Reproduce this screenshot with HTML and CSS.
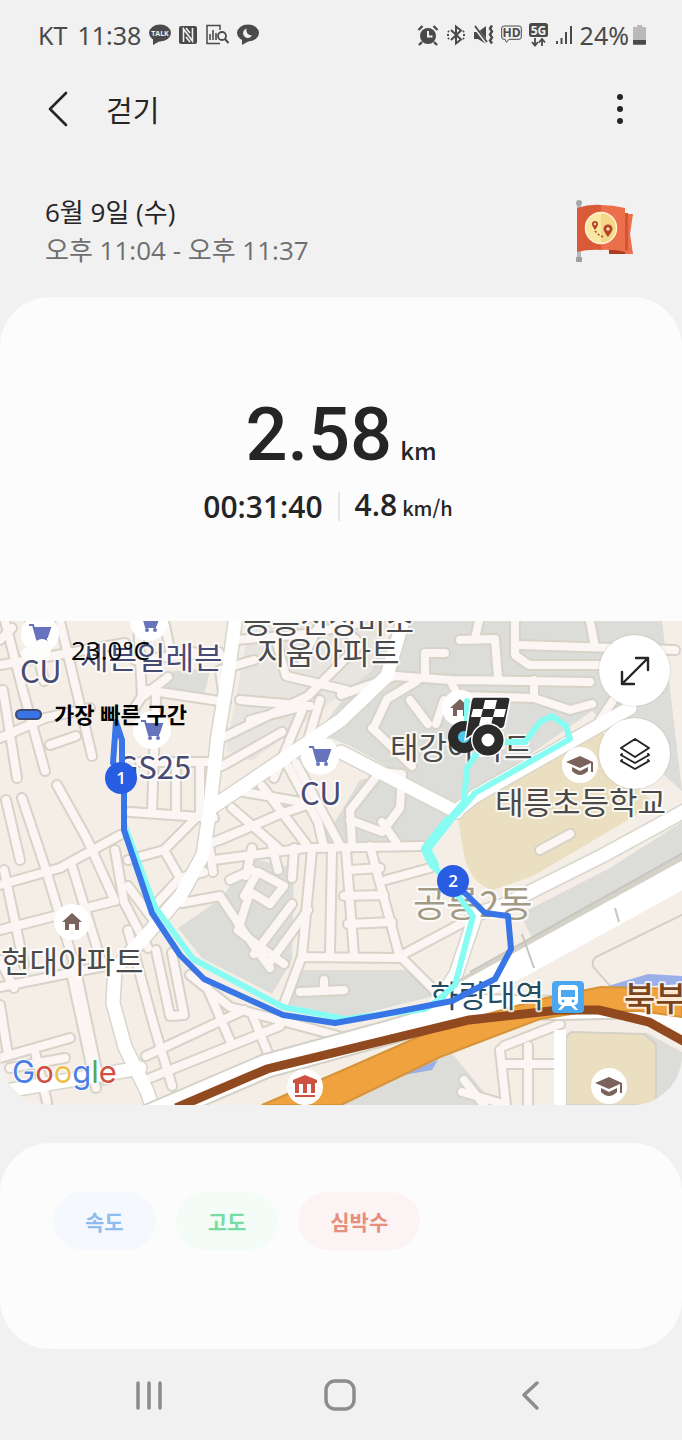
FILE: index.html
```html
<!DOCTYPE html>
<html lang="ko">
<head>
    <meta charset="UTF-8">
    <meta name="viewport" content="width=device-width, initial-scale=1.0">
    <title>걷기</title>
    <link rel="stylesheet" href="styles.css">
</head>
<body>
    <div class="status-bar">
        <div class="status-left">
            <span>KT</span>
            <span class="clock">11:38</span>
            <div class="status-icons">
                <svg width="22" height="22" viewBox="0 0 22 22">
                    <ellipse cx="11" cy="9" rx="11" ry="8.500" fill="#4a4a4a"/>
                    <path d="M4 14v7l7-4z" fill="#4a4a4a"/>
                    <text x="11" y="12" class="talk-text">TALK</text>
                </svg>
                <svg width="18" height="22" viewBox="0 0 18 22">
                    <rect y="2" width="18" height="18" rx="2" fill="#4a4a4a"/>
                    <path d="M4.500 18V5l9 12V4M7 4l4 5M7 13l4 5" fill="none" stroke="#f1f1f1" stroke-width="1.600"/>
                </svg>
                <svg width="24" height="22" viewBox="0 0 24 22">
                    <path d="M15 6V1.500H2v18h13" fill="none" stroke="#4a4a4a" stroke-width="1.500"/>
                    <path d="M5 16v-6M8 16V6M11 16V9" stroke="#4a4a4a" stroke-width="1.600"/>
                    <circle cx="17" cy="12" r="4" fill="none" stroke="#4a4a4a" stroke-width="1.800"/>
                    <path d="M20 15l3.500 4" stroke="#4a4a4a" stroke-width="2"/>
                </svg>
                <svg width="22" height="22" viewBox="0 0 22 22">
                    <ellipse cx="11" cy="9" rx="11" ry="8.500" fill="#4a4a4a"/>
                    <path d="M5 14v7l7-4z" fill="#4a4a4a"/>
                    <path d="M9.500 4.500a4.800 4.800 0 1 0 5.500 7a5.500 5.500 0 0 1-5.500-7z" fill="#f1f1f1"/>
                </svg>
            </div>
        </div>
        <div class="status-right">
            <svg width="22" height="22" viewBox="0 0 22 22">
                <circle cx="11" cy="12" r="8" fill="#4a4a4a"/>
                <path d="M1.500 6l4-4M20.500 6l-4-4M5 18l-3 3M17 18l3 3" stroke="#4a4a4a" stroke-width="2.400"/>
                <path d="M11 7v5.500h4.500" fill="none" stroke="#f1f1f1" stroke-width="2"/>
            </svg>
            <svg width="20" height="22" viewBox="0 0 20 22">
                <path d="M5 6l10 9.500-5 4V2.500l5 4L5 16" fill="none" stroke="#4a4a4a" stroke-width="2"/>
                <path d="M1 11h2M17 11h2M2 7l1 1M2 15l1-1M18 7l-1 1M18 15l-1-1" stroke="#4a4a4a" stroke-width="2"/>
            </svg>
            <svg width="21" height="22" viewBox="0 0 21 22">
                <path d="M1 8h4l8-6v18l-8-5H1z" fill="#4a4a4a"/>
                <path d="M1 2l13 17" stroke="#f1f1f1" stroke-width="3.500"/>
                <path d="M2 2l12 16" stroke="#4a4a4a" stroke-width="1.800"/>
                <path d="M19 1.500l-2 3 2 3-2 3 2 3-2 3 2 3" fill="none" stroke="#4a4a4a" stroke-width="2.400"/>
            </svg>
            <svg width="21" height="22" viewBox="0 0 21 22">
                <path d="M3 2h15q2.300 0 2.300 2v9q0 2.300-2.300 2.300H8l-2.500 3-1.500-3H3q-2.300 0-2.300-2.300V4Q.700 2 3 2z" fill="none" stroke="#4a4a4a"/>
                <text x="10.500" y="13" class="hd-text">HD</text>
            </svg>
            <svg width="19" height="24" viewBox="0 0 19 24">
                <rect y="0" width="19" height="14" rx="2.500" fill="#4a4a4a"/>
                <text x="9.500" y="11.500" class="g-text">5G</text>
                <path d="M6 15v7M3 19l3 3.500 3-3.500M13 23v-7M10 19.500l3-3.500 3 3.500" fill="none" stroke="#4a4a4a" stroke-width="1.800"/>
            </svg>
            <svg width="18" height="22" viewBox="0 0 18 22">
                <path d="M2 20v-3M6.500 20v-6M11 20V8M16 20V2" stroke="#4a4a4a" stroke-width="2"/>
            </svg>
            <span class="battery-text">24%</span>
            <svg class="battery" width="13" height="22" viewBox="0 0 13 22">
                <path d="M4 1h5v2h3.500q.500 0 .500.500V16H0V3.500Q0 3 .500 3H4z" fill="#b9b9b9"/>
                <path d="M0 16h13v4q0 .800-.800.800H.800Q0 20.800 0 20z" fill="#4a4a4a"/>
            </svg>
        </div>
    </div>

    <header class="app-bar">
        <button class="icon-btn" type="button" aria-label="뒤로">
            <svg width="22" height="36" viewBox="0 0 22 36">
                <path d="M19 2L3 18l16 16" class="line" stroke-width="2.600"/>
            </svg>
        </button>
        <h1>걷기</h1>
        <button class="icon-btn more" type="button" aria-label="더보기">
            <svg width="8" height="32" viewBox="0 0 8 32">
                <g fill="#252525">
                    <circle cx="4" cy="4" r="3"/>
                    <circle cx="4" cy="16" r="3"/>
                    <circle cx="4" cy="28" r="3"/>
                </g>
            </svg>
        </button>
    </header>

    <section class="session">
        <div>
            <p class="date">6월 9일 (수)</p>
            <p class="time">오후 11:04 - 오후 11:37</p>
        </div>
        <svg class="flag" width="60" height="64" viewBox="0 0 60 64">
            <path d="M33 15h25l-3 20 3 20H34z" fill="#ec6f4b"/>
            <path d="M34 50l16 2v3H34z" fill="#a93c22"/>
            <path d="M48 14h5v38l-5-2z" fill="#cf5535"/>
            <rect x="2" y="6" width="4" height="56" fill="#b5b8ba"/>
            <circle cx="4" cy="4" r="3" fill="#a5a8aa"/>
            <rect x="1" y="58" width="6" height="5" rx="1" fill="#9da0a2"/>
            <path d="M2 9q12-4 25-3v45q-13-1-25 2z" fill="#da5a38"/>
            <path d="M26 6q12 0 24 3v44q-12-3-24-2z" fill="#ec6f4b"/>
            <circle cx="26" cy="29" r="16" fill="#f9e7a2"/>
            <path d="M26 14a15 15 0 0 1 0 30z" fill="#f3d889"/>
            <circle cx="26" cy="29" r="15.500" fill="none" stroke="#fff3cf" stroke-width="1.500"/>
            <path d="M20 31s-3-4-3-6a3 3 0 0 1 6 0c0 2-3 6-3 6zM33 38s-4.500-6-4.500-8a4.500 4.500 0 0 1 9 0c0 2-4.500 8-4.500 8z" fill="#b5402a"/>
            <circle cx="20" cy="25" r="1.200" fill="#f9e7a2"/>
            <circle cx="33" cy="30" r="1.800" fill="#f9e7a2"/>
            <path d="M20 32q4 5 9 6" fill="none" stroke="#b5402a" stroke-width="1.500" stroke-dasharray="2 2"/>
        </svg>
    </section>

    <main>
        <section class="card workout">
            <div class="summary">
                <p class="distance"><strong>2.58</strong><span>km</span></p>
                <p class="stats">
                    <span class="duration">00:31:40</span>
                    <span class="speed">4.8 <small>km/h</small></span>
                </p>
            </div>

            <div class="map">
                <svg class="map-canvas" viewBox="0 621 682 484" preserveAspectRatio="xMidYMid slice">
                    <defs>
                        <g id="minor">
                            <path d="M0 640l12-12M5 621l18 70 22 80M0 665l125-22M0 738l45-20 45-10M60 621l32 135M3 690l14 88M50 745l26-9M30 621l14 60"/>
                            <path d="M22 798l24 72 30 100 22 105M57 785l30 54 28 62M0 885l60-17 60-33M0 930l110-28M72 866l30 98M20 860l-14-60M4 870l20 95M115 850l9 52 24 46"/>
                            <path d="M0 987l120-24M70 968l26 120M0 1005l8 50M0 1058l70-20M10 1068l55-10M35 1052l12 50M0 960l14 28"/>
                            <path d="M128 930l26 96 18 60M156 950l14 66 14-1-12-62M146 1056l98-46M150 1078l130-52M206 985l26 60M190 975l40 32 112 30M252 1014l18 44"/>
                            <path d="M138 621l4 76 26-20M132 712l14-22 80 12M156 697l-4 115M176 762v50M130 812l84 6M200 762v54M140 762h76M135 660l84-8M165 625l6 30"/>
                            <path d="M128 860l36-10 16 28-24 26M128 886l30 40M164 850l30-30M180 878l24-6M176 650l46 6"/>
                            <path d="M213 872l-4-28 34-14M214 860l92-12 116-2M232 808l46 40M262 786l44 58M220 840l60-26 36-12M286 762l32 60 6 26M244 792l68 12M340 845l-44-82M252 848l-6 28M272 846l6 24M294 848l-2 30M230 880l22-10"/>
                            <path d="M312 850l-10 106-18 48M332 850l-2 104M302 957l100 1M370 846l30 112M402 955l64-34M350 870l30-2M346 850l8 106M344 896l40-1M348 924l44-2M402 958l34 34M386 880l44-12M352 844l-2-34 30-38 22 2-2 34-18 24-32-12M396 842l-14-20"/>
                            <path d="M182 903l38-7M220 896l24 36 26 36"/>
                            <path d="M224 700l-4-30 34-10M218 740l90-44 50-50M250 720l54-14-30 72M240 700l70 6M222 766l60-34M236 640l70-6 50-10M276 640l10 36 60 14M302 660l20-40M320 700l-12 40M356 640l-34-30"/>
                            <path d="M341 695l54-19 55 4 140 2M460 640l35-1 3 40M425 675v-22h20M515 621v34l14 10h82M520 645l155 5M590 621l5 26M475 638l4-17M450 680l8 16 76 2M534 680v18l36 12 22-6M375 725l12-26 30-18M372 728l40 38M410 700l18 24M444 700l-8 24M600 720l20-30"/>
                            <path d="M500 1050l6 55M504 1046l56-22M528 1046v59M506 1064h50M462 1092l42 12M464 1080l20 25M540 850l30-16"/>
                            <path d="M238 930l12-38 20 12 14-18-26-14-14 24M254 954l38-50M270 962l38-52M240 932l44 32M300 992l44-2M324 990v-10"/>
                        </g>
                        <g id="major">
                            <path d="M236 615l-8 60-10 60-9 80-6 40-22 40-38 44-28 30-2 34 12 44 22 44 10 30"/>
                            <path d="M211 808l130-88 46-44 18-62M341 752l116 60M455 812l20-16 155-88M690 808l-88 48-100 50-26 8-20 60-16 24M0 1092l140-24"/>
                        </g>
                        <g id="cart">
                            <circle r="19" fill="#fff"/>
                            <path d="M-11-9h4l1 3H10l-3 9H-4M-7-9l4 14H7" fill="none" stroke="#6673bd" stroke-width="2"/>
                            <path d="M-6-6H10L7 3H-4z" fill="#6673bd"/>
                            <circle cx="-2" cy="8" r="2" fill="#6673bd"/>
                            <circle cx="6" cy="8" r="2" fill="#6673bd"/>
                        </g>
                        <g id="house">
                            <circle r="18" fill="#fff"/>
                            <path d="M-10 0L0-9 10 0H7v8H3V2h-6v6h-4V0z" fill="#79635c"/>
                        </g>
                        <g id="school">
                            <circle r="18" fill="#fff"/>
                            <path d="M-14-3L0-9l13 6L0 3z" fill="#79635c"/>
                            <path d="M-8 2l8 4 8-4v4q-8 8-16 0zM11-3h2V7h-2z" fill="#79635c"/>
                        </g>
                    </defs>

                    <rect y="621" width="682" height="484" fill="#f4eee7"/>

                    <!-- building blocks -->
                    <g fill="#dcdcd8">
                        <path d="M400 621h262l20 170-90-80-120 84-14 10-110-60-30-12z"/>
                        <path d="M250 621h140l-18 50-120 90-26-10z" fill="#e8e4df"/>
                        <path d="M165 672l46-4-8 30-36-4z"/>
                        <path d="M318 850l42-70 50-10 40 50-28 24z"/>
                        <path d="M178 928l44-30 26-40 46 10-2 92-20 34-70-36z"/>
                        <path d="M296 970h110l28 26-88 22-60-14z"/>
                        <path d="M682 822v60l-140 76-22-44 90-46z"/>
                        <path d="M325 1105l125-54 45 54zM645 1032l37 20v53h-37z"/>
                        <path d="M92 1078l16-6 4 12-16 4z"/>
                    </g>
                    <path d="M457 812l24-16 120-66 40 60 14 14-122 72-40 14q-24-6-30-40z" fill="#ebdfc1"/>

                    <use href="#minor" class="road casing"/>
                    <use href="#major" class="road casing-major"/>
                    <use href="#minor" class="road minor"/>
                    <use href="#major" class="road major"/>

                    <path d="M470 990l215-120" class="road" stroke="#d4d1c7" stroke-width="30"/>
                    <path d="M470 992l215-118" class="road" stroke="#fff" stroke-width="26"/>
                    <path d="M470 972l215-120M522 934l12 34M615 908l4 14" class="thin"/>
                    <path d="M594 968q-4-8 4-12l90-44v66l-76 10z" fill="#f4eee7" stroke="#d4d1c7" stroke-width="2"/>
                    <path d="M608 986l40-12 34 2v8l-60 4z" fill="#9aafe8"/>

                    <path d="M566 1105v-65q0-6 6-8l72 2 12 10v61z" fill="#ebdfc1" stroke="#d4d1c7" stroke-width="2"/>
                    <path d="M560 1105v-75" stroke="#fff" stroke-width="12"/>
                    <path d="M140 1120l126-54 124-34 90-26 80 2 90-2 60 34" class="road" stroke="#d4d1c7" stroke-width="26"/>
                    <path d="M140 1120l126-54 124-34 90-26 80 2 90-2 60 34" class="road" stroke="#fff" stroke-width="22"/>
                    <path d="M440 1004l60-28" class="road" stroke="#fff" stroke-width="20"/>
                    <path d="M398 1076l40-16-6 10z" fill="#9aafe8"/>
                    <path d="M262 1105l79-34 100-44 100-28 60-12 81 2v28l-42-6h-50l-50 8-100 38-99 48z" fill="#f0a23f" stroke="#d69338" stroke-width="2"/>
                    <path d="M176 1108l91-39 74-18 128-31 90-10h40l50 12 36 20" fill="none" stroke="#914a20" stroke-width="9"/>

                    <!-- places -->
                    <use href="#cart" x="40" y="634"/>
                    <use href="#cart" x="149" y="622"/>
                    <use href="#cart" x="152" y="730"/>
                    <use href="#cart" x="320" y="756"/>
                    <use href="#house" x="72" y="922"/>
                    <use href="#house" x="460" y="708"/>
                    <use href="#school" x="580" y="765"/>
                    <use href="#school" x="609" y="1086"/>
                    <g transform="translate(305 1087)">
                        <circle r="18" fill="#fff"/>
                        <path d="M-12-4v-3L0-12l12 5v3h-2V6h-4V-3H2V6h-4V-3h-4V6h-4V-4zM-10 8h20v2h-20z" fill="#cc5142"/>
                    </g>
                    <g class="place">
                        <text x="243" y="633">공릉신성미소</text>
                        <text x="257" y="664">지움아파트</text>
                        <text x="390" y="759">태강아파트</text>
                        <text x="495" y="814">태릉초등학교</text>
                        <text x="1" y="973">현대아파트</text>
                        <g class="shop">
                            <text x="20" y="683">CU</text>
                            <text x="80" y="669">세븐일레븐</text>
                            <text x="117" y="779">GS25</text>
                            <text x="300" y="805">CU</text>
                        </g>
                        <text x="413" y="917" class="district">공릉2동</text>
                        <text x="430" y="1007" class="station">화랑대역</text>
                        <text x="624" y="1011" class="highway">북부</text>
                    </g>
                    <g transform="translate(552 981)">
                        <rect width="32" height="32" rx="4" fill="#4ba7f0"/>
                        <path d="M10 4h12q4 0 4 4v12q0 4-4 4l4 5h-3l-4-4h-6l-4 4H6l4-5q-4 0-4-4V8q0-4 4-4z" fill="#fff"/>
                        <path d="M9 9h14v7H9z" fill="#4ba7f0"/>
                        <circle cx="11" cy="20" r="1.500" fill="#4ba7f0"/>
                        <circle cx="21" cy="20" r="1.500" fill="#4ba7f0"/>
                    </g>

                    <!-- walked route -->
                    <g fill="none" stroke-linejoin="round" stroke-linecap="round">
                        <g stroke="#86fcf3" stroke-width="6">
                            <path d="M467 701v38M478 752l-11 16-3 34-18 21-22 26 4 10 25 30 20 27-18 69-18 16-12 8-80 10-62-12-90-48-38-52-31-83"/>
                            <path d="M448 823l17-18 10-12 95-54-4-13-14-10-12 6-15 20h-22"/>
                            <path d="M448 821l-22 28 8 16" stroke-width="10"/>
                        </g>
                        <path d="M116 722l-3 41 11 15v52l28 83 28 42 24 24 79 36 52 8 45-8 72-14 43-22 16-30-3-33-23-3-32-32M116 722l6 18v38" stroke="#3875e6" stroke-width="6"/>
                    </g>
                    <g class="pin">
                        <circle cx="121" cy="778" r="16"/>
                        <text x="121" y="784">1</text>
                        <circle cx="453" cy="881" r="16"/>
                        <text x="453" y="887">2</text>
                    </g>

                    <!-- start and finish -->
                    <circle cx="464" cy="737" r="11" fill="#4ec8f0" stroke="#2b2b2b" stroke-width="10"/>
                    <path d="M474 697h33q4 0 3 4l-5 24q-1 4-5 4h-18l-17 11 6-39q1-4 3-4z" fill="#2b2b2b" stroke="#fff" stroke-width="1.500"/>
                    <path d="M485 700h12l-2 9h-12zM473 709h10l-2 8h-10zM495 709h11l-2 8h-11zM481 717h12l-2 8h-12z" fill="#fff"/>
                    <circle cx="488" cy="740" r="17" fill="#fff"/>
                    <circle cx="488" cy="740" r="11" fill="#fff" stroke="#2b2b2b" stroke-width="9"/>

                    <text x="12" y="1083" class="google"><tspan fill="#4c7fe4">G</tspan><tspan fill="#cf4f43">o</tspan><tspan fill="#ecbf45">o</tspan><tspan fill="#4c7fe4">g</tspan><tspan fill="#57a65a">l</tspan><tspan fill="#cf4f43">e</tspan></text>
                </svg>

                <div class="map-info">
                    <div class="weather">
                        <svg width="32" height="24" viewBox="0 0 32 24">
                            <path d="M7 22a6 6 0 0 1 0-12 7 7 0 0 1 7-4 9 9 0 0 1 17 4q1 9-8 10-4 3-9 2z" fill="#fdfdfb"/>
                        </svg>
                        <span>23.0°C</span>
                    </div>
                    <div class="legend"><i></i><span>가장 빠른 구간</span></div>
                </div>

                <div class="map-buttons">
                    <button type="button" aria-label="지도 확대">
                        <svg width="32" height="32" viewBox="0 0 32 32">
                            <path d="M3 29L29 3M17 3h12v12M3 17v12h12" class="line" stroke-width="2.400"/>
                        </svg>
                    </button>
                    <button type="button" aria-label="지도 유형">
                        <svg width="34" height="34" viewBox="0 0 34 34">
                            <path d="M17 2l14 9-14 9-14-9zM4 17l-1 1 14 8 14-8-1-1M4 23l-1 1 14 8 14-8-1-1" class="line" stroke-width="2"/>
                        </svg>
                    </button>
                </div>
            </div>
        </section>

        <section class="card chart">
            <button type="button" class="chip speed-chip">속도</button>
            <button type="button" class="chip altitude-chip">고도</button>
            <button type="button" class="chip heart-chip">심박수</button>
        </section>
    </main>

    <nav class="nav-bar">
        <button type="button" aria-label="최근 앱">
            <svg width="32" height="32" viewBox="0 0 32 32">
                <path d="M5 4v25M16 4v25M27 4v25" stroke-width="3.500"/>
            </svg>
        </button>
        <button type="button" aria-label="홈">
            <svg width="32" height="32" viewBox="0 0 32 32">
                <rect x="2" y="2" width="28" height="28" rx="9" stroke-width="3.500"/>
            </svg>
        </button>
        <button type="button" aria-label="이전">
            <svg width="32" height="32" viewBox="0 0 32 32">
                <path d="M22 4L9 16l13 13" stroke-width="3.500"/>
            </svg>
        </button>
    </nav>
</body>
</html>
```
FILE: styles.css
```css
* {
    margin: 0;
    padding: 0;
    box-sizing: border-box;
}

body {
    font-family: 'Open Sans', 'Noto Sans CJK KR', sans-serif;
    background: #f1f1f1;
    color: #252525;
    min-height: 100vh;
    display: flex;
    flex-direction: column;
}

svg {
    display: block;
    flex-shrink: 0;
}

button {
    background: none;
    border: none;
    font-family: inherit;
    cursor: pointer;
}

.line {
    fill: none;
    stroke: #252525;
    stroke-linecap: round;
    stroke-linejoin: round;
}

/* status bar */
.status-bar {
    display: flex;
    justify-content: space-between;
    align-items: center;
    height: 70px;
    padding: 0 36px 0 38px;
    font-family: 'Noto Sans', sans-serif;
    font-size: 25px;
    color: #4a4a4a;
}

.status-left,
.status-icons {
    display: flex;
    align-items: center;
    gap: 8px;
}

.status-right {
    display: flex;
    align-items: center;
    gap: 7px;
}

.clock {
    margin-left: 2px;
}

.talk-text,
.hd-text,
.g-text {
    font-family: 'Open Sans', sans-serif;
    font-weight: 700;
    text-anchor: middle;
}

.talk-text {
    font-size: 7px;
    fill: #f1f1f1;
}

.hd-text {
    font-size: 12px;
    fill: #4a4a4a;
}

.g-text {
    font-size: 12px;
    fill: #f1f1f1;
}

.battery {
    margin-left: -3px;
}

/* title */
.app-bar {
    display: flex;
    align-items: center;
    height: 78px;
    padding: 0 50px 0 38px;
}

.app-bar h1 {
    font-size: 29px;
    font-weight: 400;
    margin-left: 28px;
}

.icon-btn {
    display: flex;
    align-items: center;
    justify-content: center;
    width: 40px;
    height: 48px;
}

.more {
    width: 24px;
    margin-left: auto;
}

.session {
    display: flex;
    justify-content: space-between;
    align-items: center;
    padding: 45px 47px 28px 45px;
    font-size: 26px;
    line-height: 38px;
}

.time {
    color: #6f6f6f;
}

/* cards */
.card {
    background: #fcfcfc;
    border-radius: 50px;
    overflow: hidden;
}

.summary {
    height: 324px;
    display: flex;
    flex-direction: column;
    align-items: center;
    padding-top: 96px;
    padding-right: 26px;
}

.distance {
    display: flex;
    align-items: baseline;
    gap: 8px;
    font-family: 'Noto Sans CJK KR', sans-serif;
    font-size: 24px;
    font-weight: 500;
    line-height: 84px;
    padding-left: 26px;
}

.distance strong {
    font-family: Roboto, sans-serif;
    font-size: 74px;
    font-weight: 500;
}

.stats {
    display: flex;
    align-items: center;
    font-size: 30px;
    font-weight: 600;
    line-height: 26px;
}

.speed {
    display: flex;
    align-items: baseline;
    gap: 5px;
    margin-left: 15px;
    padding-left: 15px;
    border-left: 2px solid #e6e6e6;
}

.speed small {
    font-family: 'Noto Sans CJK KR', sans-serif;
    font-size: 20px;
    font-weight: 500;
}

/* map */
.map {
    position: relative;
}

.map-canvas {
    width: 100%;
    height: 484px;
}

.road {
    fill: none;
    stroke-linecap: round;
    stroke-linejoin: round;
}

.casing {
    stroke: #d6d3c8;
    stroke-width: 12px;
}

.minor {
    stroke: #fbf5f3;
    stroke-width: 8px;
}

.casing-major {
    stroke: #d8d5cb;
    stroke-width: 16px;
}

.major {
    stroke: #fff;
    stroke-width: 13px;
}

.thin {
    fill: none;
    stroke: #c6c5c0;
    stroke-width: 2px;
}

.place {
    font-family: 'Noto Sans CJK KR', sans-serif;
    font-size: 31px;
    fill: #4a4a4a;
    stroke: #fff;
    stroke-width: 4px;
    stroke-opacity: 0.8;
    stroke-linejoin: round;
    paint-order: stroke;
}

.shop {
    fill: #474b73;
}

.district {
    font-size: 36px;
    fill: #a39a86;
}

.station {
    fill: #264c63;
}

.highway {
    font-size: 34px;
    font-weight: 500;
    fill: #7a451d;
}

.pin {
    fill: #285ce2;
    font-size: 17px;
    font-weight: 600;
    text-anchor: middle;
}

.pin text {
    fill: #fff;
}

.google {
    font-family: Inter, sans-serif;
    font-size: 31px;
    font-weight: 400;
    stroke: #fff;
    stroke-width: 2px;
    paint-order: stroke;
}

.map-info {
    position: absolute;
    top: 11px;
    left: 15px;
    color: #000;
}

.weather {
    display: flex;
    align-items: center;
    gap: 19px;
    padding-left: 5px;
    font-size: 26px;
    line-height: 36px;
}

.legend {
    display: flex;
    align-items: center;
    gap: 12px;
    margin-top: 28px;
    font-size: 22px;
    font-weight: 700;
    line-height: 36px;
}

.legend i {
    width: 27px;
    height: 11px;
    border: 2px solid #3c4b70;
    border-radius: 6px;
    background: #3a74ea;
}

.map-buttons {
    position: absolute;
    top: 14px;
    right: 12px;
    display: flex;
    flex-direction: column;
    gap: 12px;
}

.map-buttons button {
    display: flex;
    align-items: center;
    justify-content: center;
    width: 71px;
    height: 71px;
    border-radius: 50%;
    background: #fff;
    box-shadow: 0 0 2px rgba(0, 0, 0, 0.2);
}

/* graph tabs */
.chart {
    display: flex;
    align-items: flex-start;
    gap: 20px;
    height: 206px;
    margin-top: 38px;
    padding: 49px 53px;
}

.chip {
    height: 58px;
    padding: 0 32px;
    border-radius: 29px;
    font-size: 21px;
    font-weight: 700;
}

.speed-chip {
    background: #f5f9fd;
    color: #8dbcf0;
}

.altitude-chip {
    background: #f3fcf7;
    color: #79dca4;
}

.heart-chip {
    background: #fcf4f4;
    color: #e58f7c;
}

/* navigation */
.nav-bar {
    display: flex;
    flex: 1;
    min-height: 91px;
    padding: 0 55px 0 53px;
}

.nav-bar button {
    flex: 1;
    display: flex;
    align-items: center;
    justify-content: center;
}

.nav-bar svg {
    fill: none;
    stroke: #8c8c8c;
    stroke-linecap: round;
    stroke-linejoin: round;
}
```
